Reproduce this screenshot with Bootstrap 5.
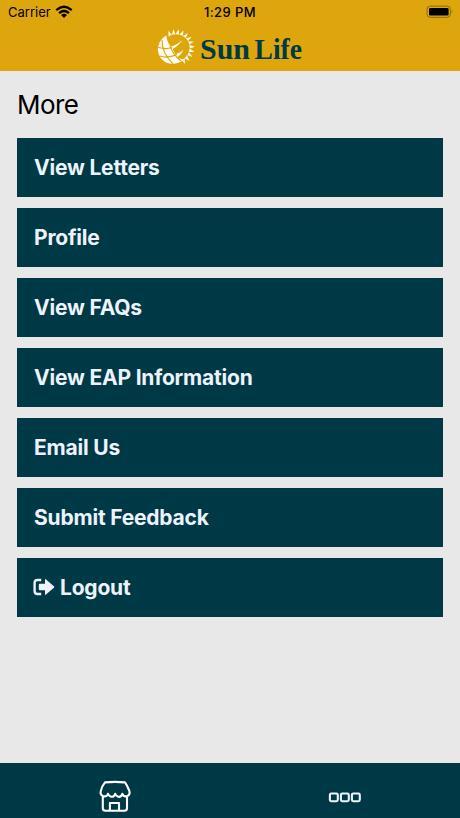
<!DOCTYPE html>
<html lang="en">
<head>
<meta charset="utf-8">
<meta name="viewport" content="width=device-width, initial-scale=1">
<title>More</title>
<link rel="stylesheet" href="https://cdn.jsdelivr.net/npm/bootstrap@5.3.0/dist/css/bootstrap.min.css">
<style>
body{background:#e8e8e8;font-family:Inter,"Liberation Sans",sans-serif;color:#000}
.app-head{background:#dda60c;height:71px}
.status{height:24px;font-size:13px;line-height:24px;padding:0 6px 0 8px}
.status>*{flex:1 1 0}
.clock{font-weight:500;font-size:13px;letter-spacing:.4px;padding-right:2px}
.brand{height:47px;padding:4px 0 0 0}
.brand-name{font-family:"Liberation Serif",serif;font-weight:700;fill:#003946}
.title{font-size:26px;line-height:32px;font-weight:400;letter-spacing:-.6px;margin:18px 0 17px}
.page{padding:0 17px}
.menu{gap:11.3px}
.menu-btn{background:#003946;color:#edf3fd;height:58.7px;font-size:21px;font-weight:650;padding:0 17px;border:0;border-radius:0;line-height:1;letter-spacing:-.2px}
.menu-btn:hover{background:#004d5d;color:#fff}
.logout-icon{margin:0 5px 0 -1px}
.tabs{background:#003946;height:55px}
.tabs a{padding-top:14px}
</style>
<script defer src="https://cdn.jsdelivr.net/npm/bootstrap@5.3.0/dist/js/bootstrap.bundle.min.js"></script>
</head>
<body class="d-flex flex-column vh-100 overflow-hidden">
<header class="app-head flex-shrink-0">
  <div class="status d-flex align-items-center">
    <div class="d-flex align-items-center"><span>Carrier</span>
      <svg class="ms-1" width="18" height="14" viewBox="0 0 18 14"><g fill="none" stroke="#000" stroke-width="2.3"><path d="M1.3 5.1Q9-1.5 16.7 5.1"/><path d="M4.1 8.1Q9 4 13.9 8.1"/></g><path d="M6.1 9.9Q9 7.8 11.9 9.9L9 12.9Z"/></svg>
    </div>
    <div class="clock text-center">1:29 PM</div>
    <div class="d-flex justify-content-end">
      <svg width="28" height="14" viewBox="0 0 28 14"><rect x="1" y="1.1" width="23.4" height="11.2" rx="3.2" fill="none" stroke="#8b6a0b"/><rect x="3" y="3" width="19.6" height="7.6" rx="1.3"/><path d="M25.7 4.8q1.7 1.9 0 3.8z" fill="#8b6a0b"/></svg>
    </div>
  </div>
  <div class="brand d-flex justify-content-center">
    <svg width="146" height="42" viewBox="0 0 146 42" role="img" aria-label="Sun Life">
      <defs><path id="ray" d="M-1.8-13.2Q-.7-15.5.7-18.6Q1.6-15.5 1.8-13.2Q0-13.8-1.8-13.2Z"/></defs>
      <g fill="#fffdf0">
        <path d="M9.3 7.4C1 12.5-1.5 22.5 3.4 29.4C9 37.5 20 38 28 30.8C24.5 31.4 22 30.8 20.2 29.2C23 27.3 25 25 26.5 21.8C23.5 24.4 21 25.6 18.3 26.2L15.6 21.1C19.5 18.8 23 15.8 25.4 12.1C21.5 15.8 17.5 17.8 13.8 18.6C11.5 15.5 9.5 11.5 9.3 7.4Z"/>
        <g transform="translate(19.2 19.6)">
          <use href="#ray" transform="rotate(-27)"/><use href="#ray" transform="rotate(-11)"/><use href="#ray" transform="rotate(5)"/><use href="#ray" transform="rotate(21)"/><use href="#ray" transform="rotate(37)"/><use href="#ray" transform="rotate(53)"/><use href="#ray" transform="rotate(69)"/><use href="#ray" transform="rotate(85)"/><use href="#ray" transform="rotate(101)"/><use href="#ray" transform="rotate(117)"/><use href="#ray" transform="rotate(133)"/><use href="#ray" transform="rotate(149)"/>
        </g>
      </g>
      <path d="M5.2 12C4.6 20 8.5 28.5 16 35.8M1 19.2C6 21 11 21 15.2 19.6M2.7 28C8.5 30 14 29.3 20 26.6M13 18C15 24 19 29 24 33" fill="none" stroke="#dda60c" stroke-width="1.1"/>
      <text class="brand-name" x="43" y="31.3" font-size="29" textLength="50" lengthAdjust="spacingAndGlyphs">Sun</text>
      <text class="brand-name" x="97.5" y="31.3" font-size="29" textLength="47.5" lengthAdjust="spacingAndGlyphs">Life</text>
    </svg>
  </div>
</header>
<main class="page flex-grow-1">
  <h1 class="title">More</h1>
  <nav class="menu d-flex flex-column">
    <a class="btn menu-btn d-flex align-items-center" href="#">View Letters</a>
    <a class="btn menu-btn d-flex align-items-center" href="#">Profile</a>
    <a class="btn menu-btn d-flex align-items-center" href="#">View FAQs</a>
    <a class="btn menu-btn d-flex align-items-center" href="#">View EAP Information</a>
    <a class="btn menu-btn d-flex align-items-center" href="#">Email Us</a>
    <a class="btn menu-btn d-flex align-items-center" href="#">Submit Feedback</a>
    <a class="btn menu-btn d-flex align-items-center" href="#">
      <svg class="logout-icon" width="22" height="18" viewBox="0 0 22 18"><path d="M8.2 2H4.6Q1.6 2 1.6 5V13Q1.6 16 4.6 16H8.2" fill="none" stroke="#edf3fd" stroke-width="2.4"/><path d="M6.9 5.7H12V2Q12 .6 13 1.4L20.9 8.2Q21.8 9 20.9 9.8L13 16.6Q12 17.4 12 16V12.3H6.9Q5.8 12.3 5.8 11.2V6.8Q5.8 5.7 6.9 5.7Z" fill="#edf3fd"/></svg>Logout</a>
  </nav>
</main>
<footer class="tabs d-flex flex-shrink-0">
  <a href="#" class="col-6 text-center" aria-label="Store">
    <svg width="34" height="36" viewBox="0 0 34 36" fill="none" stroke="#fff" stroke-width="2.1" stroke-linejoin="round" stroke-linecap="round"><path d="M7 5.4Q17 4.4 27 5.4Q29 8 31.4 14Q32.4 17.8 29 19.2Q25.6 20 24.4 16.8Q22.8 20.8 19.8 19.6Q17.8 19 17.2 16.8Q15.8 20.6 12.6 19.5Q10.6 19 10 16.8Q8.6 20.2 5 19Q1.8 17.6 2.8 14Q4.3 8.5 7 5.4ZM4.8 20V31Q4.8 33.8 7.6 33.8H26.4Q29 33.8 29 31V20M11.9 33.5V26H21V33.5"/></svg>
  </a>
  <a href="#" class="col-6 text-center" aria-label="More">
    <svg width="34" height="36" viewBox="0 0 34 36" fill="none" stroke="#edf5fa" stroke-width="2.1"><rect x="1.9" y="16.5" width="7.9" height="7.7" rx="1.4"/><rect x="12.9" y="16.5" width="7.9" height="7.7" rx="1.4"/><rect x="23.9" y="16.5" width="7.9" height="7.7" rx="1.4"/></svg>
  </a>
</footer>
</body>
</html>
